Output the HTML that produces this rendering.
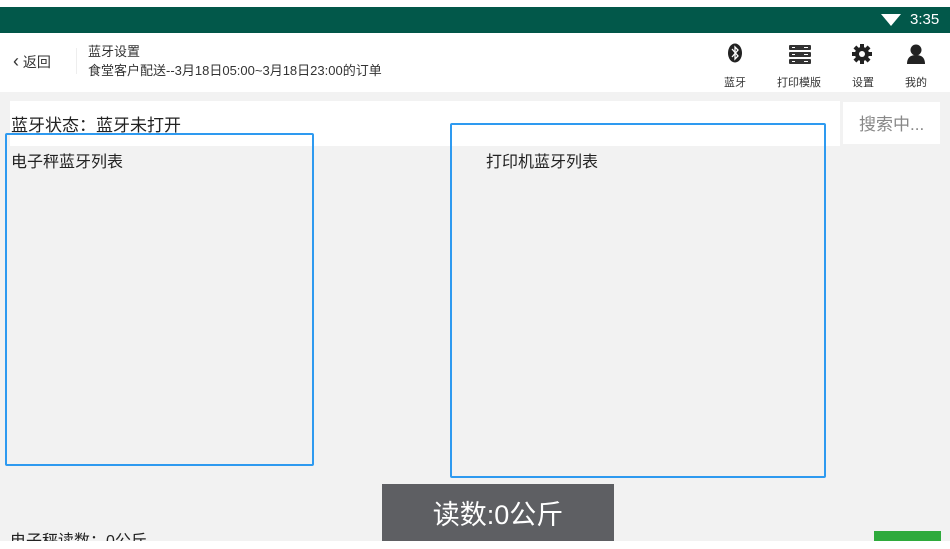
<!DOCTYPE html><html><head><meta charset="utf-8"><style>
body{margin:0;width:950px;height:549px;overflow:hidden;background:#fff;font-family:"Liberation Sans","Noto Sans CJK SC",sans-serif;position:relative}
.a{position:absolute}
</style></head><body>
<div class="a" style="left:0;top:7px;width:950px;height:26px;background:#02584a"></div>
<svg class="a" style="left:881px;top:13px" width="20" height="14"><path d="M0 1 L20 1 L10 13Z" fill="#fff"/></svg>
<div class="a" style="left:910px;top:11px;color:#fff;font-size:15px">3:35</div>
<div class="a" style="left:0;top:33px;width:950px;height:59px;background:#fff;box-shadow:0 1px 3px rgba(0,0,0,.15)"></div>
<div class="a" style="left:13px;top:51px;font-size:14px;color:#333"><span style="font-size:18px">&#x2039;</span> 返回</div>
<div class="a" style="left:76px;top:48px;width:1px;height:26px;background:#eee"></div>
<div class="a" style="left:88px;top:42px;font-size:13px;color:#333;line-height:19px">蓝牙设置<br>食堂客户配送--3月18日05:00~3月18日23:00的订单</div>
<svg class="a" style="left:727px;top:43px" width="16" height="20"><ellipse cx="8" cy="10" rx="7" ry="9.5" fill="#222"/><path d="M5 6 L11 13 L8 16 L8 4 L11 7 L5 14" stroke="#fff" stroke-width="1.3" fill="none"/></svg>
<svg class="a" style="left:789px;top:45px" width="22" height="20"><rect x="0" y="0" width="22" height="5" rx="1" fill="#333"/><rect x="0" y="7" width="22" height="5" rx="1" fill="#333"/><rect x="0" y="14" width="22" height="5" rx="1" fill="#333"/><g fill="#fff"><rect x="3" y="2" width="3" height="1"/><rect x="15" y="2" width="4" height="1"/><rect x="3" y="9" width="3" height="1"/><rect x="15" y="9" width="4" height="1"/><rect x="3" y="16" width="3" height="1"/><rect x="15" y="16" width="4" height="1"/></g></svg>
<svg class="a" style="left:852px;top:44px" width="20" height="20" viewBox="0 0 20 20"><g fill="#222"><circle cx="10" cy="10" r="7"/><rect x="8" y="0" width="4" height="20"/><rect x="0" y="8" width="20" height="4"/><rect x="8" y="0" width="4" height="20" transform="rotate(45 10 10)"/><rect x="8" y="0" width="4" height="20" transform="rotate(-45 10 10)"/></g><circle cx="10" cy="10" r="3" fill="#fff"/></svg>
<svg class="a" style="left:906px;top:44px" width="20" height="20"><circle cx="10" cy="6" r="5.5" fill="#222"/><path d="M1 20 Q1 11 10 11 Q19 11 19 20Z" fill="#222"/></svg>
<div class="a" style="left:724px;top:74px;font-size:11px;color:#333">蓝牙</div>
<div class="a" style="left:777px;top:74px;font-size:11px;color:#333">打印模版</div>
<div class="a" style="left:852px;top:74px;font-size:11px;color:#333">设置</div>
<div class="a" style="left:905px;top:74px;font-size:11px;color:#333">我的</div>
<div class="a" style="left:0;top:92px;width:950px;height:449px;background:#f2f2f2"></div>
<div class="a" style="left:10px;top:101px;width:830px;height:45px;background:#fff"></div>
<div class="a" style="left:843px;top:102px;width:97px;height:42px;background:#fff"></div>
<div class="a" style="left:11px;top:111px;font-size:17px;color:#222">蓝牙状态：蓝牙未打开</div>
<div class="a" style="left:859px;top:110px;font-size:17px;color:#888">搜索中...</div>
<div class="a" style="left:5px;top:133px;width:305px;height:329px;border:2px solid #2e9af0;border-radius:2px"></div>
<div class="a" style="left:450px;top:123px;width:372px;height:351px;border:2px solid #2e9af0;border-radius:2px"></div>
<div class="a" style="left:11px;top:148px;font-size:16px;color:#222">电子秤蓝牙列表</div>
<div class="a" style="left:486px;top:148px;font-size:16px;color:#222">打印机蓝牙列表</div>
<div class="a" style="left:382px;top:484px;width:232px;height:57px;background:#5e5f63"></div>
<div class="a" style="left:382px;top:493px;width:232px;text-align:center;font-size:27px;color:#fff">读数:0公斤</div>
<div class="a" style="left:10px;top:531px;font-size:16px;color:#222;height:10px;overflow:hidden;line-height:22px">电子秤读数：0公斤</div>
<div class="a" style="left:874px;top:531px;width:67px;height:10px;background:#2eaa3c"></div>
<div class="a" style="left:0;top:541px;width:950px;height:8px;background:#fff"></div>
</body></html>
